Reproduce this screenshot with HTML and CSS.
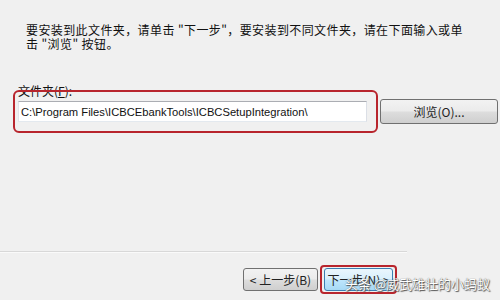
FILE: index.html
```html
<!DOCTYPE html>
<html lang="zh-CN">
<head>
    <meta charset="UTF-8">
    <title>安装位置</title>
    <link rel="stylesheet" href="styles.css">
</head>
<body>

    <div class="dialog">
        <p class="intro">要安装到此文件夹，请单击 "下一步"，要安装到不同文件夹，请在下面输入或单<br>击 "浏览" 按钮。</p>

        <label class="field-label" for="installPath">文件夹(<u>F</u>):</label>
        <div class="path-row">
            <div class="mark path-mark">
                <input type="text" id="installPath" class="path" value="C:\Program Files\ICBCEbankTools\ICBCSetupIntegration\">
            </div>
            <button class="btn browse">浏览(O)...</button>
        </div>

        <div class="rule"></div>

        <div class="footer">
            <button class="btn back">&lt; 上一步(B)</button>
            <div class="mark next-mark">
                <button class="btn next">下一步(N) &gt;</button>
            </div>
        </div>

        <div class="watermark">头条 @威武雄壮的小蚂蚁</div>
    </div>

</body>
</html>
```

FILE: styles.css
```css
body {
    margin: 0;
    background-color: #f0f0f0;
    color: #111;
    font-family: "Noto Sans CJK SC", "Liberation Sans", sans-serif;
    font-size: 12px;
}
.dialog {
    position: relative;
    width: 500px;
    height: 300px;
    overflow: hidden;
}
.intro {
    margin: 0;
    padding: 23px 0 0 26px;
    line-height: 14px;
    letter-spacing: 0.4px;
}
.field-label {
    display: block;
    margin: 33px 0 -7px 18px;
    line-height: 13px;
}
.path-row {
    display: flex;
    align-items: center;
    padding-left: 13px;
}
.mark {
    border: 2px solid #b8252d;
    border-radius: 6px;
}
.path-mark {
    padding: 9px 9px 9px 3px;
}
.path {
    display: block;
    box-sizing: border-box;
    width: 349px;
    height: 21px;
    margin: 0;
    padding: 0 2px;
    border: 1px solid #abadb3;
    border-color: #abadb3 #dbdfe6 #e3e9ef #e2e3ea;
    background: #fff;
    color: #111;
    font-family: "Liberation Sans", sans-serif;
    font-size: 11.2px;
    outline: none;
}
.btn {
    box-sizing: border-box;
    height: 23px;
    margin: 0;
    padding: 0;
    border: 1px solid #707070;
    border-radius: 3px;
    background: linear-gradient(#f2f2f2 0%, #ebebeb 48%, #dddddd 52%, #cfcfcf 100%);
    color: #222;
    font-family: "Noto Sans CJK SC", "Liberation Sans", sans-serif;
    font-size: 12px;
}
.browse {
    width: 118px;
    height: 25px;
    margin-left: 2px;
}
.rule {
    width: 407px;
    height: 0;
    margin-top: 118px;
    border-top: 1px solid #d8d8d8;
    border-bottom: 1px solid #fafafa;
}
.footer {
    display: flex;
    align-items: center;
    margin-top: 12px;
    padding-left: 243px;
}
.back {
    width: 75px;
}
.next-mark {
    margin-left: 2px;
    padding: 1px 2px;
    border-radius: 4px;
}
.next {
    width: 69px;
    border-color: #3c7fb1;
    background: linear-gradient(#eaf6fd 0%, #d9f0fc 48%, #bee6fd 52%, #a7d9f5 100%);
}
.watermark {
    position: absolute;
    right: 10px;
    bottom: 7px;
    color: #fff;
    font-size: 13px;
    text-shadow: 0 0 1px #444, 1px 1px 1px #555;
}
```
